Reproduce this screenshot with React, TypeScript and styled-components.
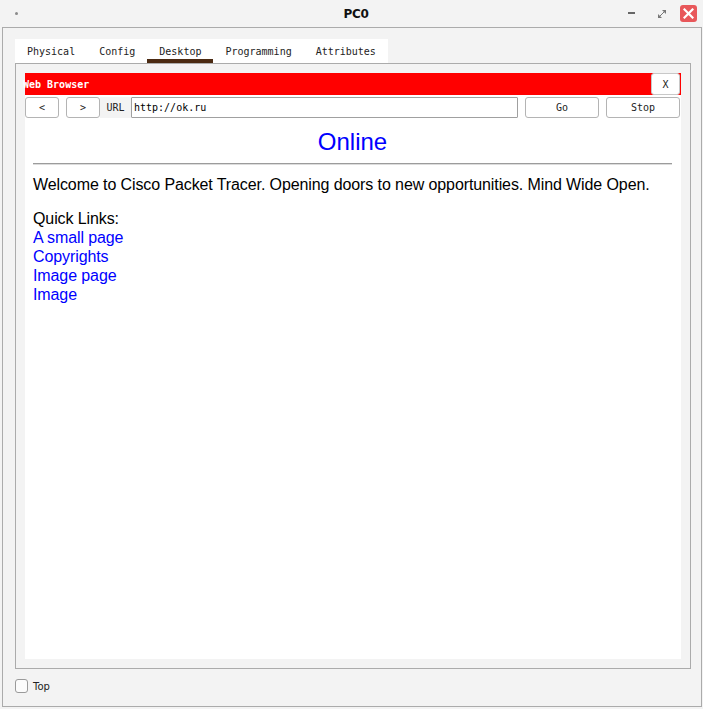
import React from "react";
import styled, { createGlobalStyle } from "styled-components";

const Global = createGlobalStyle`
  html, body { margin: 0; padding: 0; background: #f3f3f3; }
  body { font-family: "Liberation Sans", Arial, sans-serif; }
  * { box-sizing: border-box; }
`;

const mono = `"DejaVu Sans Mono", "Liberation Mono", monospace`;

const Window = styled.div`
  width: 703px;
  height: 709px;
  display: flex;
  flex-direction: column;
  background: #f3f3f3;
`;

const TitleBar = styled.div`
  height: 27px;
  display: grid;
  grid-template-columns: 1fr auto 1fr;
  align-items: center;
  padding: 0 6px 0 15px;
`;

const MenuDot = styled.span`
  width: 3px;
  height: 3px;
  border-radius: 50%;
  background: #8a8a8a;
`;

const Title = styled.div`
  font-family: "DejaVu Sans", sans-serif;
  font-weight: bold;
  font-size: 12px;
  letter-spacing: -0.3px;
  color: #111;
`;

const Controls = styled.div`
  display: flex;
  justify-content: flex-end;
  align-items: center;
`;

const CtrlBtn = styled.div`
  width: 30px;
  height: 18px;
  display: flex;
  align-items: center;
  justify-content: center;
`;

const CloseBtn = styled.div`
  width: 17px;
  height: 17px;
  border-radius: 3px;
  background: #e8575a;
  display: flex;
  align-items: center;
  justify-content: center;
  margin-left: 3px;
`;

const Frame = styled.div`
  flex: 1;
  margin: 0 1px 2px 2px;
  border: 1px solid #ababab;
  padding: 11px 10px 0 12px;
  display: flex;
  flex-direction: column;
`;

const TabBar = styled.div`
  display: flex;
  align-self: flex-start;
  background: #ffffff;
  height: 24px;
`;

const Tab = styled.div<{ $active?: boolean }>`
  position: relative;
  padding: 1px 12px 0;
  font-family: ${mono};
  font-size: 10px;
  line-height: 23px;
  color: #222;
  &::after {
    content: "";
    display: ${(p) => (p.$active ? "block" : "none")};
    position: absolute;
    left: 0;
    right: 0;
    bottom: 0;
    height: 4px;
    background: #4b2a12;
  }
`;

const Panel = styled.div`
  flex: 1;
  border: 1px solid #ababab;
  padding: 9px;
  display: flex;
  flex-direction: column;
`;

const Browser = styled.div`
  flex: 1;
  background: #ffffff;
  display: flex;
  flex-direction: column;
`;

const HeaderBar = styled.div`
  height: 22px;
  background: #ff0000;
  display: flex;
  align-items: center;
  justify-content: space-between;
`;

const HeaderTitle = styled.div`
  font-family: ${mono};
  font-weight: bold;
  font-size: 10px;
  color: #ffffff;
  margin-left: -2px;
`;

const CloseX = styled.div`
  width: 29px;
  height: 22px;
  margin-right: 1px;
  background: #ffffff;
  border: 1px solid #c8c8c8;
  border-radius: 3px;
  font-family: ${mono};
  font-size: 10px;
  color: #222;
  display: flex;
  align-items: center;
  justify-content: center;
`;

const Toolbar = styled.div`
  margin-top: 2px;
  height: 21px;
  display: flex;
  gap: 7px;
  padding-right: 1px;
`;

const Button = styled.div<{ $w: number }>`
  width: ${(p) => p.$w}px;
  height: 21px;
  border: 1px solid #b4b4b4;
  border-radius: 3px;
  background: #ffffff;
  font-family: ${mono};
  font-size: 10px;
  color: #222;
  display: flex;
  align-items: center;
  justify-content: center;
`;

const UrlGroup = styled.div`
  flex: 1;
  display: flex;
  margin-left: -7px;
`;

const UrlLabel = styled.div`
  width: 31px;
  background: #f3f3f3;
  font-family: ${mono};
  font-size: 10px;
  color: #222;
  display: flex;
  align-items: center;
  justify-content: center;
`;

const UrlInput = styled.div`
  flex: 1;
  border: 1px solid #a0a0a0;
  border-radius: 1px;
  font-family: ${mono};
  font-size: 10px;
  color: #000;
  padding-left: 2px;
  display: flex;
  align-items: center;
`;

const Page = styled.div`
  padding: 10px 9px 0 8px;
`;

const Heading = styled.div`
  text-align: center;
  color: #0000ff;
  font-size: 24px;
  line-height: 28px;
`;

const Rule = styled.div`
  margin-top: 7px;
  border-top: 1px solid #9c9c9c;
  border-bottom: 1px solid #dcdcdc;
`;

const Text = styled.div<{ $gap?: number }>`
  font-size: 16px;
  line-height: 19px;
  letter-spacing: -0.1px;
  color: #000;
  margin-top: ${(p) => p.$gap ?? 0}px;
`;

const Link = styled.div`
  font-size: 16px;
  line-height: 19px;
  letter-spacing: -0.1px;
  color: #0000ff;
`;

const Footer = styled.div`
  height: 37px;
  display: flex;
  align-items: center;
  gap: 5px;
  padding-bottom: 3px;
`;

const Check = styled.div`
  width: 13px;
  height: 14px;
  border: 1px solid #9a9a9a;
  border-radius: 3px;
  background: #fbfbfb;
`;

const CheckLabel = styled.div`
  font-family: "DejaVu Sans", sans-serif;
  font-size: 10px;
  color: #222;
`;

export default function App() {
  return (
    <>
      <Global />
      <Window>
        <TitleBar>
          <MenuDot />
          <Title>PC0</Title>
          <Controls>
            <CtrlBtn>
              <svg width="8" height="3" viewBox="0 0 8 3">
                <rect x="0" y="0" width="7" height="2" fill="#666" />
              </svg>
            </CtrlBtn>
            <CtrlBtn>
              <svg width="10" height="10" viewBox="0 0 10 10">
                <path d="M9 1 L9 5 L5 1 Z" fill="#777" />
                <path d="M1 9 L1 5 L5 9 Z" fill="#777" />
                <path d="M5 5 L8 2" stroke="#777" strokeWidth="1" />
                <path d="M5 5 L2 8" stroke="#777" strokeWidth="1" />
              </svg>
            </CtrlBtn>
            <CloseBtn>
              <svg width="11" height="11" viewBox="0 0 11 11">
                <path d="M1.5 1.5 L9.5 9.5 M9.5 1.5 L1.5 9.5" stroke="#fff" strokeWidth="2.2" strokeLinecap="square" />
              </svg>
            </CloseBtn>
          </Controls>
        </TitleBar>
        <Frame>
          <TabBar>
            <Tab>Physical</Tab>
            <Tab>Config</Tab>
            <Tab $active>Desktop</Tab>
            <Tab>Programming</Tab>
            <Tab>Attributes</Tab>
          </TabBar>
          <Panel>
            <Browser>
              <HeaderBar>
                <HeaderTitle>Web Browser</HeaderTitle>
                <CloseX>X</CloseX>
              </HeaderBar>
              <Toolbar>
                <Button $w={34}>&lt;</Button>
                <Button $w={34}>&gt;</Button>
                <UrlGroup>
                  <UrlLabel>URL</UrlLabel>
                  <UrlInput>http://ok.ru</UrlInput>
                </UrlGroup>
                <Button $w={74}>Go</Button>
                <Button $w={74}>Stop</Button>
              </Toolbar>
              <Page>
                <Heading>Online</Heading>
                <Rule />
                <Text $gap={10}>
                  Welcome to Cisco Packet Tracer. Opening doors to new opportunities. Mind Wide Open.
                </Text>
                <Text $gap={15}>Quick Links:</Text>
                <Link>A small page</Link>
                <Link>Copyrights</Link>
                <Link>Image page</Link>
                <Link>Image</Link>
              </Page>
            </Browser>
          </Panel>
          <Footer>
            <Check />
            <CheckLabel>Top</CheckLabel>
          </Footer>
        </Frame>
      </Window>
    </>
  );
}
